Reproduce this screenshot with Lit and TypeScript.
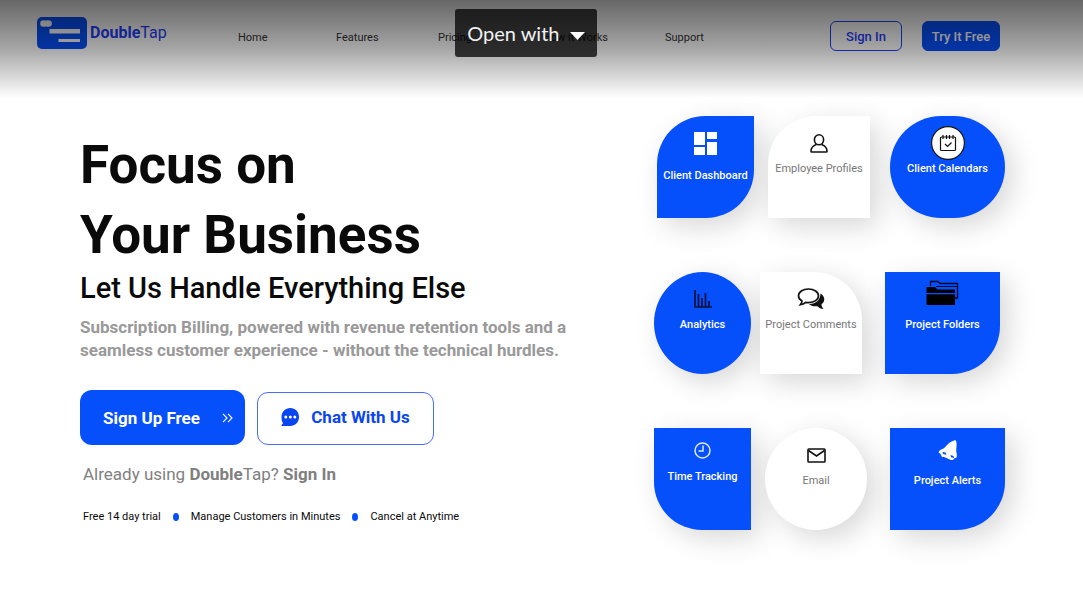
import { LitElement, html, css, svg } from "lit";
import { customElement, property } from "lit/decorators.js";

const icons: Record<string, unknown> = {
  dashboard: svg`<svg width="23" height="23" viewBox="0 0 23 23" fill="#fff"><path d="M0 0h11v13H0zM13 0h10v7H13zM13 10h10v13H13zM0 15h11v8H0z"/></svg>`,
  profile: svg`<svg width="18" height="19" viewBox="0 0 18 19" fill="none" stroke="#111" stroke-width="1.6"><ellipse cx="9" cy="5.8" rx="4.6" ry="5"/><path d="M6.4 10.4C2.8 11.600 1 13.600 1 17.300q0 .7.7.7h14.600q.7 0 .7-.7c0-3.700-1.800-5.700-5.400-6.900"/></svg>`,
  calendar: svg`<svg width="34" height="34" viewBox="0 0 34 34" fill="none" stroke="#111"><circle cx="17" cy="17" r="16.400" fill="#fff" stroke-width="1.200"/><rect x="9.500" y="11" width="15" height="13.500" rx="1" stroke-width="1.200"/><path d="M12 9v4M15.500 9v4M18.500 9v4M22 9v4" stroke-width="1.200"/><path d="m14 18 2.500 2.500 4-4" stroke-width="1.200"/></svg>`,
  chart: svg`<svg width="18" height="18" viewBox="0 0 18 18" fill="none" stroke="#06103a" stroke-width="1.700"><path d="M1 0v17h17M4.500 17V4M8 17V8M11.500 17V3M15 17v-6"/></svg>`,
  comments: svg`<svg width="28" height="22" viewBox="0 0 28 22"><path d="M23.500 5.500c3 2 4.500 4.500 3.500 7.500-.4 1.500-1.500 2.500-2.500 3.200 0 1.500.6 3 1.900 4.800-2.300-.2-4.500-1.200-6-2.800-3.500.5-6.400-.4-8.400-2.200 6.500.2 11.500-4 11.500-10.500Z" fill="#111"/><path d="M11.500 1C5.700 1 1.500 4 1.500 7.800c0 2.200 1.400 4.100 3.500 5.300 0 1.300-.7 2.400-1.700 3.600 2.200-.2 4-1 5.300-2.300 1 .2 1.900.2 2.900.2 5.700 0 10-3 10-6.800S17.200 1 11.500 1Z" fill="#fff" stroke="#111" stroke-width="1.700"/></svg>`,
  folders: svg`<svg width="33" height="26" viewBox="0 0 33 26"><path d="M4.500 6V1.500H12l2 2h17.500V18H29" fill="none" stroke="#03081f" stroke-width="1.300"/><path d="M10 6.500h21" stroke="#03081f"/><path d="M.5 7H9l2.500 2.500H29V13H.500z"/><path d="M.5 14.300H29V25H.5z"/></svg>`,
  clock: svg`<svg width="17" height="17" viewBox="0 0 17 17" fill="none" stroke="#dfe6ff" stroke-width="1.500"><circle cx="8.500" cy="8.500" r="7.500"/><path d="M9 3.500V9H4.500"/></svg>`,
  mail: svg`<svg width="19" height="15" viewBox="0 0 19 15" fill="none" stroke="#111" stroke-width="1.600"><rect x="1" y="1" width="17" height="13" rx=".8"/><path d="m1.500 2.500 8 5.500 8-5.500"/></svg>`,
  bell: svg`<svg width="20" height="21" viewBox="0 0 20 21"><path d="M16 .5c1-.8 2.600.2 2.300 1.500 1 3.500-.8 7 .3 11 .2 1.500.4 3-.1 4.500L16 18.500c-.4 1.700-2.600 1.900-4.100.9L6 17c-2 .2-3-.6-2.800-2.200L.8 12.500C.5 11 2.200 10 4 9.300 8.500 7.500 9 2.500 16 .5Z" fill="#fff"/><path d="m4.500 12 3 .5 1 2.200-3.500-.7zM12.500 15l3 1 .5 2-3-.7z" fill="#0650fb"/></svg>`,
};

interface Tile {
  icon: string;
  label: string;
  tone: "blue" | "white";
  shape: string;
  place?: string;
}

const rows: { kind: string; tiles: Tile[] }[] = [
  {
    kind: "first",
    tiles: [
      { icon: "dashboard", label: "Client Dashboard", tone: "blue", shape: "leaf", place: "spread" },
      { icon: "profile", label: "Employee Profiles", tone: "white", shape: "top-left" },
      { icon: "calendar", label: "Client Calendars", tone: "blue", shape: "round" },
    ],
  },
  {
    kind: "second",
    tiles: [
      { icon: "chart", label: "Analytics", tone: "blue", shape: "ellipse" },
      { icon: "comments", label: "Project Comments", tone: "white", shape: "top-right" },
      { icon: "folders", label: "Project Folders", tone: "blue", shape: "bottom-right", place: "high" },
    ],
  },
  {
    kind: "third",
    tiles: [
      { icon: "clock", label: "Time Tracking", tone: "blue", shape: "bottom-left", place: "raised" },
      { icon: "mail", label: "Email", tone: "white", shape: "ellipse" },
      { icon: "bell", label: "Project Alerts", tone: "blue", shape: "bottom-right", place: "raised-spread" },
    ],
  },
];

@customElement("feature-tile")
class FeatureTile extends LitElement {
  @property({ attribute: false }) tile!: Tile;

  static styles = css`
    :host {
      display: block;
    }
    .tile {
      box-sizing: border-box;
      height: 102px;
      padding-top: 10px;
      display: flex;
      flex-direction: column;
      align-items: center;
      font-size: 11px;
      line-height: 18px;
      white-space: nowrap;
      box-shadow: 8px 8px 28px rgba(0, 0, 0, 0.16);
    }
    .blue {
      background: #0650fb;
      color: #fff;
      font-weight: 500;
    }
    .white {
      background: #fff;
      color: #777;
    }
    .icon {
      height: 34px;
      display: flex;
      align-items: center;
    }
    .leaf { border-radius: 48px 0; }
    .top-left { border-radius: 48px 0 0 0; }
    .top-right { border-radius: 0 48px 0 0; }
    .bottom-right { border-radius: 0 0 48px 0; }
    .bottom-left { border-radius: 0 0 0 48px; }
    .round { border-radius: 51px; }
    .ellipse { border-radius: 50%; }
    .spread { gap: 7px; }
    .high { padding-top: 4px; gap: 6px; }
    .raised { padding-top: 5px; gap: 1px; }
    .raised-spread { padding-top: 5px; gap: 5px; }
  `;

  render() {
    const t = this.tile;
    return html`<div class="tile ${t.tone} ${t.shape} ${t.place ?? ""}">
      <span class="icon">${icons[t.icon]}</span>
      <span>${t.label}</span>
    </div>`;
  }
}

@customElement("app-root")
class AppRoot extends LitElement {
  static styles = css`
    :host {
      display: block;
      position: relative;
      min-height: 100vh;
      background: #fff;
      color: #0a0a0a;
      font-family: Roboto, "Liberation Sans", sans-serif;
    }
    a {
      color: inherit;
      text-decoration: none;
    }
    button {
      font: inherit;
      cursor: pointer;
      box-sizing: border-box;
      padding: 0;
    }
    h1, h2, p, ul {
      margin: 0;
      padding: 0;
    }
    .shade {
      position: absolute;
      inset: 0 0 auto;
      height: 98px;
      background: linear-gradient(rgba(0, 0, 0, 0.6), rgba(0, 0, 0, 0.35) 50%, rgba(0, 0, 0, 0));
      pointer-events: none;
    }
    .open-with {
      position: absolute;
      top: 9px;
      left: 42%;
      width: 142px;
      height: 48px;
      display: flex;
      align-items: center;
      justify-content: center;
      gap: 10px;
      border: 0;
      border-radius: 3px;
      background: rgba(0, 0, 0, 0.74);
      color: #f1f1f1;
      font-family: Lato, sans-serif;
      font-size: 20px;
      line-height: 24px;
    }
    .caret {
      margin-top: 5px;
    }
    header {
      display: flex;
      align-items: flex-start;
      padding: 17px 83px 0 37px;
      height: 38px;
    }
    .brand {
      display: flex;
      align-items: center;
      gap: 3px;
      width: 201px;
      font-size: 16px;
      line-height: 20px;
      color: #1f40ff;
    }
    .brand b { font-weight: 700; }
    nav {
      display: grid;
      grid-template-columns: 98px 102px 105px 122px auto;
      padding-top: 13px;
      font-size: 11px;
      line-height: 16px;
      color: #333;
    }
    .account {
      margin-left: auto;
      padding-top: 4px;
      display: flex;
      gap: 20px;
      font-size: 13px;
      font-weight: 500;
    }
    .account button {
      height: 30px;
      border: 1px solid #1f40ff;
      border-radius: 6px;
      background: transparent;
      color: #1f40ff;
      width: 72px;
    }
    .account .try {
      width: 78px;
      border-color: #0650fb;
      background: #0650fb;
      color: #fff;
    }
    main {
      display: flex;
      justify-content: space-between;
      padding: 61px 78px 0 80px;
    }
    .pitch {
      padding-top: 14px;
    }
    h1 {
      font-size: 53px;
      line-height: 70px;
      font-weight: 700;
    }
    h2 {
      font-size: 29px;
      line-height: 34px;
      font-weight: 500;
      margin-top: 1px;
    }
    .lead {
      max-width: 500px;
      margin-top: 11px;
      font-size: 17px;
      line-height: 23px;
      font-weight: 700;
      color: #999;
    }
    .actions {
      display: flex;
      align-items: flex-end;
      gap: 12px;
      margin-top: 28px;
      font-size: 17px;
      font-weight: 700;
    }
    .signup, .chat {
      display: flex;
      align-items: center;
    }
    .signup {
      width: 165px;
      height: 55px;
      padding: 0 12px 0 23px;
      justify-content: space-between;
      border: 0;
      border-radius: 12px;
      background: #0650fb;
      color: #fff;
    }
    .chat {
      width: 177px;
      height: 53px;
      padding-bottom: 3px;
      justify-content: center;
      gap: 12px;
      border: 1px solid #4a6cff;
      border-radius: 11px;
      background: #fff;
      color: #0a46f0;
    }
    .already {
      margin: 17px 0 0 3px;
      font-size: 17px;
      line-height: 24px;
      color: #808080;
    }
    .perks {
      display: flex;
      align-items: center;
      margin: 22px 0 0 3px;
      font-size: 11px;
      line-height: 18px;
      list-style: none;
    }
    .perks li {
      display: flex;
      align-items: center;
    }
    .perks li + li::before {
      content: "";
      width: 6px;
      height: 8px;
      margin: 0 12px;
      border-radius: 50%;
      background: #0650fb;
    }
    .features {
      display: grid;
      row-gap: 54px;
      width: 351px;
      align-content: start;
    }
    .row {
      display: grid;
      grid-template-columns: 97px 102px 115px;
    }
    .first { padding-left: 3px; column-gap: 14px; }
    .first :last-child { margin-left: 6px; margin-right: -6px; }
    .second { column-gap: 9px; }
    .second :last-child { margin-left: 14px; margin-right: -14px; }
    .third { column-gap: 14px; }
    .third :last-child { margin-left: 9px; margin-right: -9px; }
  `;

  render() {
    return html`
      <header>
        <a class="brand" href="#">
          <svg width="50" height="32" viewBox="0 0 50 32" aria-hidden="true">
            <rect width="50" height="32" rx="5" fill="#0650fb" />
            <g fill="#fff">
              <circle cx="6.500" cy="6.500" r="3.300" /><circle cx="11.500" cy="6.500" r="3.300" /><path d="M7 3.600h4v5.800H7z" />
              <path d="M12.500 12H43v4.500H12.500zM21.500 22H43v3H21.500z" />
            </g>
          </svg>
          <span><b>Double</b>Tap</span>
        </a>
        <nav>
          <a href="#">Home</a><a href="#">Features</a><a href="#">Pricing</a><a href="#">How it Works</a><a href="#">Support</a>
        </nav>
        <div class="account">
          <button>Sign In</button>
          <button class="try">Try It Free</button>
        </div>
      </header>
      <main>
        <section class="pitch">
          <h1>Focus on<br />Your Business</h1>
          <h2>Let Us Handle Everything Else</h2>
          <p class="lead">Subscription Billing, powered with revenue retention tools and a seamless customer experience - without the technical hurdles.</p>
          <div class="actions">
            <button class="signup">
              Sign Up Free
              <svg width="11" height="10" viewBox="0 0 11 10" fill="none" stroke="#fff" stroke-width="1.100" aria-hidden="true">
                <path d="m1 .800 4 4.200-4 4.200M6 .800l4 4.200-4 4.200" />
              </svg>
            </button>
            <button class="chat">
              <svg width="18" height="18" viewBox="0 0 18 18" fill="#0a46f0" aria-hidden="true">
                <path d="M9.300 0C14.200 0 18 3.800 18 9s-3.800 9-8.700 9H.6q-.6-.5 0-1L2 15.200C.8 13.500.500 11.500.500 9 .500 3.800 4.400 0 9.300 0Z" />
                <g fill="#fff"><circle cx="4.800" cy="9" r="1.500" /><circle cx="9.300" cy="9" r="1.500" /><circle cx="13.800" cy="9" r="1.500" /></g>
              </svg>
              Chat With Us
            </button>
          </div>
          <p class="already">Already using <b>Double</b>Tap? <a href="#"><b>Sign In</b></a></p>
          <ul class="perks">
            <li>Free 14 day trial</li>
            <li>Manage Customers in Minutes</li>
            <li>Cancel at Anytime</li>
          </ul>
        </section>
        <section class="features">
          ${rows.map(
            (row) => html`<div class="row ${row.kind}">${row.tiles.map((tile) => html`<feature-tile .tile=${tile}></feature-tile>`)}</div>`,
          )}
        </section>
      </main>
      <div class="shade"></div>
      <button class="open-with">
        Open with
        <svg class="caret" width="15" height="8" viewBox="0 0 15 8" fill="#fff" aria-hidden="true"><path d="M0 0h15L7.500 8z" /></svg>
      </button>
    `;
  }
}
